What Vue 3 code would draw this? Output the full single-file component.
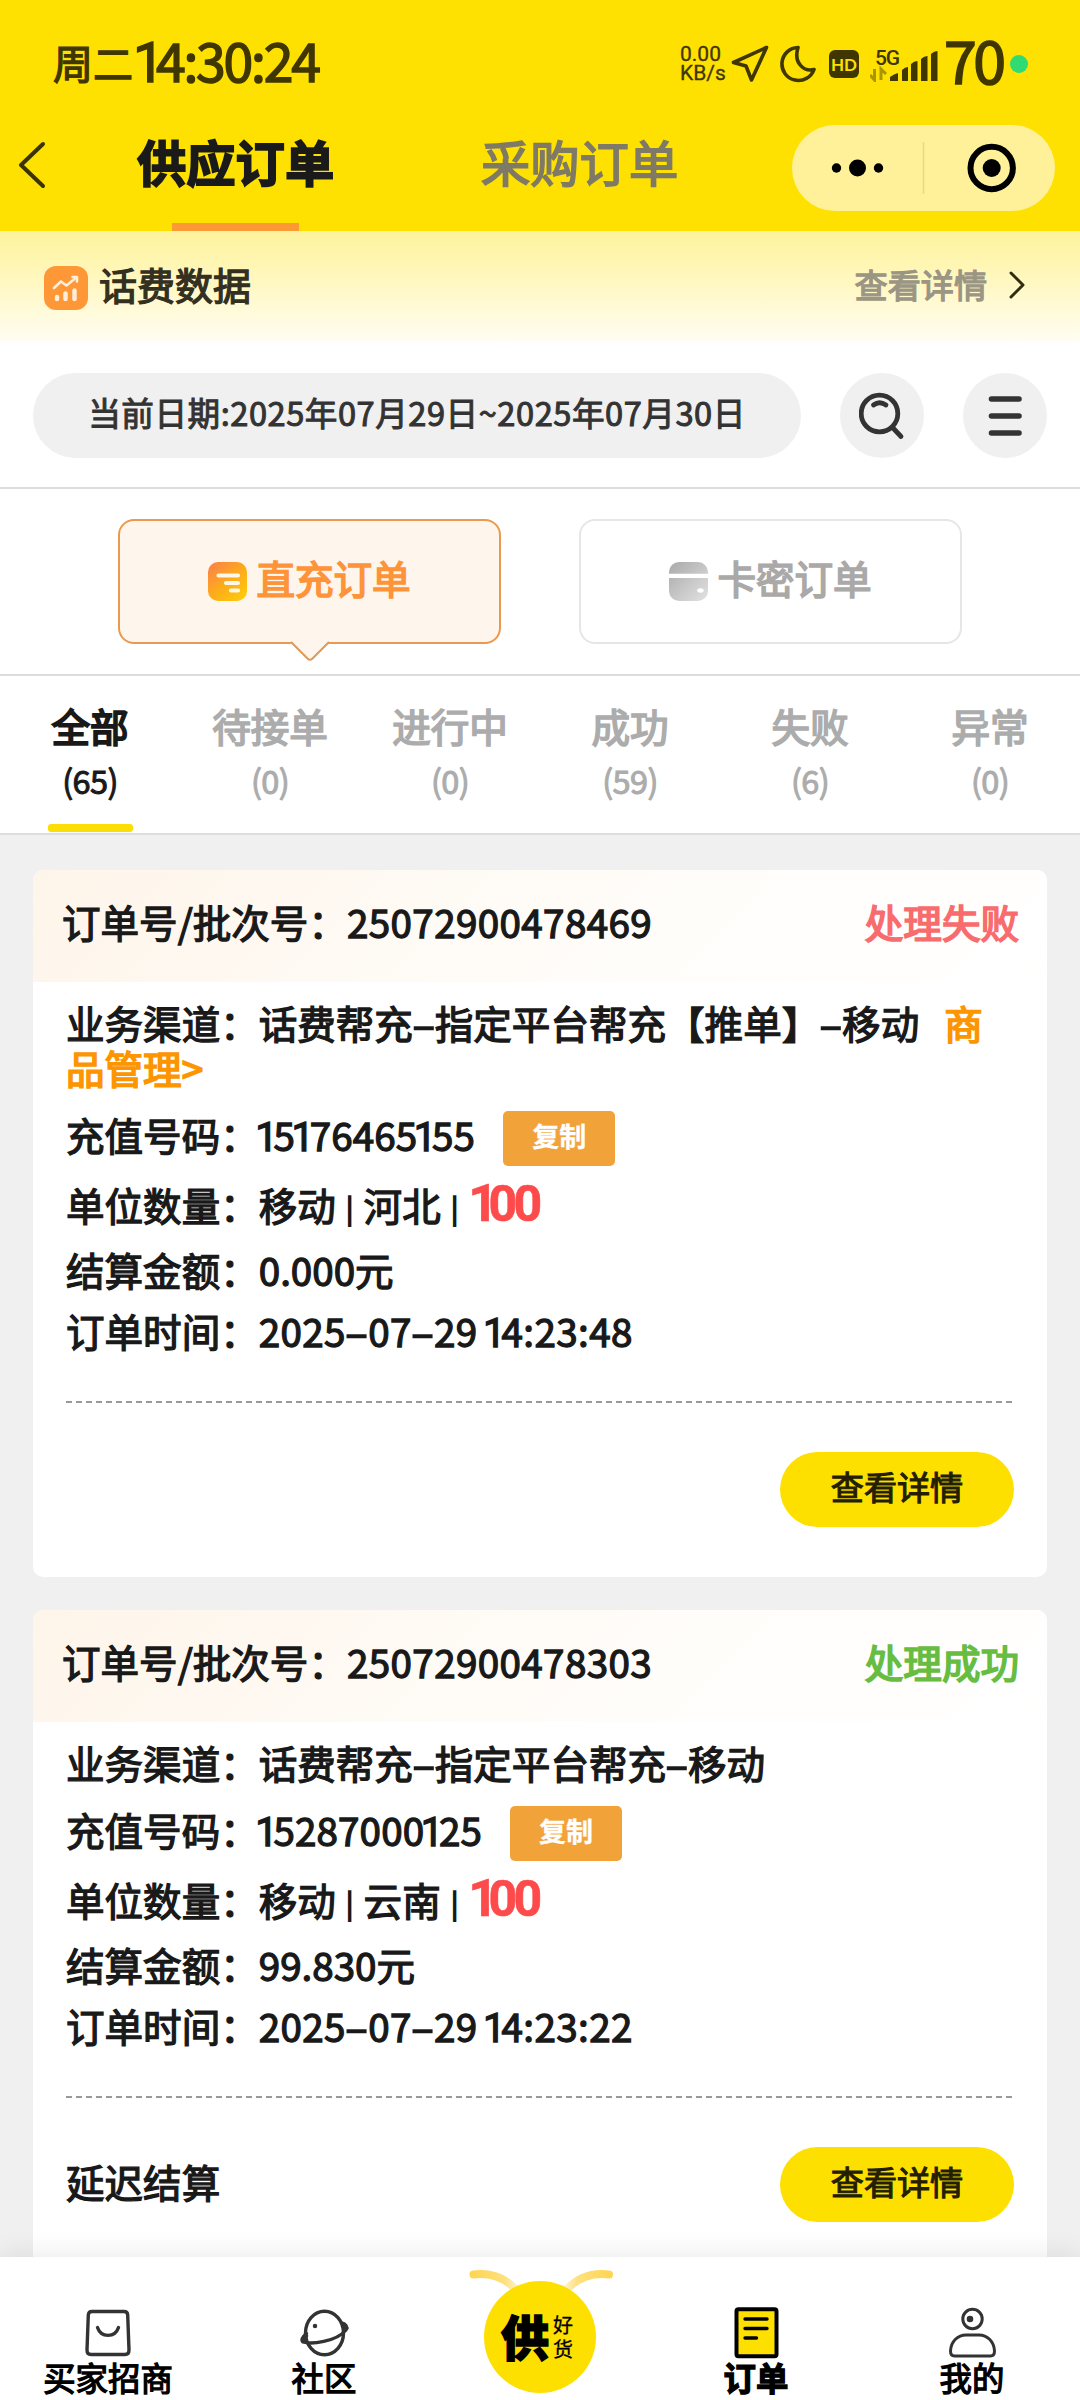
<script setup>
import { h } from 'vue'

// Narrow ones, wide dashes and short bars, as in the rounded interface face.
const marks = { 1: 't-one', '-': 't-dash', '|': 't-bar' }
const T = (props) =>
  h(
    'span',
    { class: 't' },
    props.v.split(/([1|-])/).filter(Boolean).map((p) => (marks[p] ? h('span', { class: marks[p] }, p) : p))
  )
T.props = ['v']

const tabs = [
  { name: '全部', count: 65, active: true },
  { name: '待接单', count: 0 },
  { name: '进行中', count: 0 },
  { name: '成功', count: 59 },
  { name: '失败', count: 6 },
  { name: '异常', count: 0 },
]

const orders = [
  {
    id: '25072900478469', status: '处理失败', kind: 'fail',
    channel: '话费帮充-指定平台帮充【推单】-移动', link: '商品管理>',
    phone: '15176465155', carrier: '移动 | 河北 |', amount: '100',
    settle: '0.000元', time: '2025-07-29 14:23:48', note: '',
  },
  {
    id: '25072900478303', status: '处理成功', kind: 'ok',
    channel: '话费帮充-指定平台帮充-移动', link: '',
    phone: '15287000125', carrier: '移动 | 云南 |', amount: '100',
    settle: '99.830元', time: '2025-07-29 14:23:22', note: '延迟结算',
  },
]
</script>

<template>
  <div class="screen">
    <header class="top">
      <div class="status">
        <div class="clock"><span class="day">周二</span><span class="time"><T v="14:30:24" /></span></div>
        <div class="sys">
          <div class="rate"><span>0.00</span><span>KB/s</span></div>
          <svg class="s-nav" width="38" height="38" viewBox="0 0 38 38"><path d="M35.5 2.500 L2.500 17.500 L15 21 L20.500 35 Z" /></svg>
          <svg class="s-moon" width="36" height="38" viewBox="0 0 36 38"><path d="M18 2.500 A16.500 16.500 0 1 0 34 24.500 C25 27 13 19 18 2.500Z" /></svg>
          <div class="hd">HD</div>
          <svg class="s-sig" width="70" height="36" viewBox="0 0 70 36">
            <text x="5" y="19" textLength="25">5G</text>
            <path class="faint" d="M4.500 23 V34 L0 29 M11 34 V23 L16 28" />
            <path class="bar" d="M20 35v-4q4-3 8-4v8zM32 35V24q3-3 6-3v14zM41 35V18q3-3 6.500-3v20zM51 35V13q3-3 6.500-3v25zM61 35V8q3-3 6.500-3v30z" />
          </svg>
          <div class="batt">70</div>
          <i class="dot"></i>
        </div>
      </div>
      <div class="nav">
        <svg class="back" width="28" height="48" viewBox="0 0 28 48"><path d="M25 3 L3 24 L25 45" /></svg>
        <div class="navtab on">供应订单</div>
        <div class="navtab">采购订单</div>
        <div class="capsule">
          <svg width="263" height="86" viewBox="0 0 263 86">
            <circle cx="44.500" cy="43" r="4.700" /><circle cx="65.500" cy="43" r="8.500" /><circle cx="86.500" cy="43" r="4.700" />
            <path d="M131.500 17v52" stroke="#e4d98c" stroke-width="1.500" />
            <circle cx="199.700" cy="43" r="21.200" fill="none" stroke="#000" stroke-width="6" /><circle cx="199.700" cy="43" r="9" />
          </svg>
        </div>
      </div>
    </header>

    <section class="data">
      <svg width="44" height="44" viewBox="0 0 44 44">
        <rect width="44" height="44" rx="12" fill="#fe9735" />
        <g fill="none" stroke="#ffeeda" stroke-linecap="round" stroke-linejoin="round">
          <path d="M10 22 L17 15.500 L22.500 19.500 L31 12.500" stroke-width="2.600" />
          <path d="M28.500 11 H33 V15.500" stroke-width="2.600" />
          <path d="M13 31v2M21.500 27.500v5.500M30.500 24.500V33" stroke-width="4.500" />
        </g>
      </svg>
      <span class="data-title">话费数据</span>
      <span class="data-more">查看详情</span>
      <svg class="chev" width="18" height="30" viewBox="0 0 18 30"><path d="M3 3 L15 15 L3 27" /></svg>
    </section>

    <section class="filter">
      <div class="pill">当前日期:2025年07月29日~2025年07月30日</div>
      <div class="round">
        <svg width="46" height="48" viewBox="0 0 46 48"><circle cx="20.500" cy="21.500" r="18.300" /><path d="M34 36 L42 44.500M14.500 13 Q20.500 8.500 27 13" /></svg>
      </div>
      <div class="round last">
        <svg width="36" height="42" viewBox="0 0 36 42"><path d="M4.500 4H32M4.500 21H32M4.500 38H32" stroke-width="5.600" /></svg>
      </div>
    </section>

    <section class="types">
      <div class="type sel">
        <svg width="39" height="39" viewBox="0 0 39 39">
          <defs><linearGradient id="gOrange" x1="0" y1="0" x2=".8" y2="1"><stop offset="0" stop-color="#fb7d4d" /><stop offset=".55" stop-color="#fdab1c" /><stop offset="1" stop-color="#fec90a" /></linearGradient></defs>
          <rect width="39" height="39" rx="10" fill="url(#gOrange)" />
          <path d="M10.500 13.500H30M18 21H30M23 28.500H30" stroke="#fff6e8" stroke-width="4.200" stroke-linecap="round" />
        </svg>
        <span>直充订单</span>
        <svg class="tip" width="42" height="22" viewBox="0 0 42 22"><path d="M2 1 L18.500 17.500 Q21 20 23.500 17.500 L40 1" /></svg>
      </div>
      <div class="type">
        <svg width="39" height="39" viewBox="0 0 39 39">
          <defs><linearGradient id="gGrey" x1="0" y1="0" x2="1" y2="1"><stop offset="0" stop-color="#a9a9a9" /><stop offset="1" stop-color="#e2e2e2" /></linearGradient></defs>
          <rect width="39" height="39" rx="10" fill="url(#gGrey)" />
          <path d="M0 13.800H39" stroke="#fff" stroke-width="4.200" />
          <ellipse cx="31.500" cy="28.500" rx="3.200" ry="2.200" fill="#fff" />
        </svg>
        <span>卡密订单</span>
      </div>
    </section>

    <section class="tabs">
      <div v-for="t in tabs" :key="t.name" class="tab" :class="{ active: t.active }">
        <span class="tab-name">{{ t.name }}</span>
        <span class="tab-count">({{ t.count }})</span>
        <i></i>
      </div>
    </section>

    <main class="list">
      <article v-for="o in orders" :key="o.id" class="card">
        <div class="card-head">
          <span>订单号/批次号：<span class="digits">{{ o.id }}</span></span>
          <span class="state" :class="o.kind">{{ o.status }}</span>
        </div>
        <div class="card-body">
          <div class="row channel">业务渠道：<T :v="o.channel" /><span v-if="o.link" class="link">{{ o.link }}</span></div>
          <div class="row phone"><span class="phone-text">充值号码：<span class="number"><T :v="o.phone" /></span></span><span class="copy">复制</span></div>
          <div class="row unit">单位数量：<T :v="o.carrier" /><span class="amount"><T :v="o.amount" /></span></div>
          <div class="row settle">结算金额：<T :v="o.settle" /></div>
          <div class="row when">订单时间：<span class="digits"><T :v="o.time" /></span></div>
          <div class="rule"></div>
          <div class="foot"><span>{{ o.note }}</span><span class="btn">查看详情</span></div>
        </div>
      </article>
    </main>

    <footer class="bottom">
      <div class="item">
        <svg width="60" height="52" viewBox="0 0 60 52"><path d="M14 4.500H46Q49.500 4.500 49.700 8L51 43Q51 47.500 47 47.500H13Q9 47.500 9 43L10.300 8Q10.500 4.500 14 4.500Z" /><path d="M19.500 20.500C23 31 37 31 40.500 20.500" /></svg>
        <span>买家招商</span>
      </div>
      <div class="item">
        <svg width="60" height="52" viewBox="0 0 60 52"><ellipse cx="30.500" cy="26" rx="19" ry="21.700" /><path d="M12.500 26.500Q6 32 9 35C17 37.500 42 35 52 23Q54 17.500 47.500 16" /><path d="M9 33L12 29M52.500 21L50 18" stroke-width="4.500" /><circle cx="21" cy="19" r="1.500" fill="#333" stroke-width="1.500" /></svg>
        <span>社区</span>
      </div>
      <div class="item mid">
        <svg class="horns" width="150" height="34" viewBox="0 0 150 34">
          <defs>
            <linearGradient id="hl" x1="0" x2="1"><stop offset="0" stop-color="#fdd655" /><stop offset=".7" stop-color="#fee07e" /><stop offset="1" stop-color="#fff3cc" /></linearGradient>
            <linearGradient id="hr" x1="1" x2="0"><stop offset="0" stop-color="#fdd655" /><stop offset=".7" stop-color="#fee07e" /><stop offset="1" stop-color="#fff3cc" /></linearGradient>
          </defs>
          <path d="M7.500 10.500Q35 7.500 52 28" stroke="url(#hl)" /><path d="M143 10.500Q115.500 7.500 98.500 28" stroke="url(#hr)" />
        </svg>
        <div class="ball"><b>供</b><span>好<br />货</span></div>
      </div>
      <div class="item cur">
        <svg width="60" height="52" viewBox="0 0 60 52"><rect x="10.500" y="2.300" width="40" height="47" rx="2" fill="#fee000" stroke="#000" stroke-width="4" /><path d="M19 12H41M19 21.500H41M19 31H30.500" stroke="#000" /></svg>
        <span>订单</span>
      </div>
      <div class="item">
        <svg width="60" height="52" viewBox="0 0 60 52"><g stroke-width="3"><circle cx="30.500" cy="12" r="9.700" /><circle cx="28" cy="12" r="1.800" fill="#222" /><path d="M8.500 44C9 34 16 28 24 28H37C45 28 52 34 52.500 44Q52.500 49 48.500 49H12.500Q8.500 49 8.500 44Z" /></g></svg>
        <span>我的</span>
      </div>
    </footer>
  </div>
</template>

<style>
body { background: #f0f0f0; }
.t-one { font-family: Roboto, sans-serif; font-size: 1.04em; line-height: 1; margin: 0 -0.11em 0 -0.09em; }
.t-dash { display: inline-block; line-height: 1; margin: 0 0.11em; transform: scaleX(1.8); }
.t-bar { font-size: 0.7em; line-height: 1; margin: 0 0.06em; vertical-align: 2px; -webkit-text-stroke-width: 1.6px; }
</style>

<style scoped>
.screen {
  width: 1080px; height: 2400px; overflow: hidden; display: flex; flex-direction: column;
  background: #f0f0f0; color: #191919;
  font-family: "Noto Sans CJK SC", "Noto Sans", sans-serif; font-size: 38.550px;
  -webkit-text-stroke: 1.300px currentColor; white-space: nowrap;
}
svg { display: block; flex: none; -webkit-text-stroke: 0; }
.top { height: 231px; background: #fee100; flex: none; }
.status { height: 110px; display: flex; justify-content: space-between; color: #403600; padding: 18px 52px 0 53px; box-sizing: border-box; }
.clock { display: flex; align-items: center; height: 90px; }
.day { font-size: 40px; line-height: 88px; margin-top: -2px; }
.time { font-size: 53.500px; line-height: 82px; margin-top: -8px; letter-spacing: -2.200px; -webkit-text-stroke: 1.500px currentColor; margin-left: 5px; }
.sys { display: flex; align-items: center; height: 92px; }
.rate { font: 21px/19px Roboto, sans-serif; display: flex; flex-direction: column; width: 42px; margin-right: 9px; -webkit-text-stroke: .3px currentColor; }
.s-nav, .s-moon { fill: none; stroke: #403600; stroke-width: 3.6; stroke-linejoin: round; }
.s-moon { margin-left: 11px; }
.hd { width: 30px; height: 28px; border-radius: 6px; margin-left: 13px; background: #403600; color: #fee100; font: bold 17px/29px Lato, sans-serif; text-align: center; -webkit-text-stroke: 0; }
.s-sig { margin-left: 11px; fill: #403600; }
.s-sig text { font: 500 21px Roboto, sans-serif; }
.faint { fill: none; stroke: #a89500; stroke-width: 3; }
.batt { font: 59px/92px "Noto Sans CJK SC", sans-serif; letter-spacing: -3.500px; margin: -10px 0 0 4px; width: 61px; -webkit-text-stroke: 1.600px currentColor; }
.dot { width: 18px; height: 18px; border-radius: 50%; background: #2fdb72; margin-left: 5px; }
.nav { height: 121px; display: flex; align-items: flex-start; }
.back { margin: 31px 0 0 18px; fill: none; stroke: #3b3200; stroke-width: 4; stroke-linecap: round; stroke-linejoin: round; }
.navtab { width: 198px; margin-left: 91px; height: 121px; line-height: 102px; font-size: 49.300px; color: #7f7a66; position: relative; -webkit-text-stroke-width: 1.800px; }
.navtab.on { color: #1a1a1a; font-weight: 700; }
.navtab.on::after { content: ""; position: absolute; left: 35px; bottom: 0; width: 127px; height: 8px; background: #fd9934; }
.navtab + .navtab { margin-left: 146px; }
.capsule { width: 263px; height: 86px; margin: 15px 0 0 113px; border-radius: 43px; background: #fef199; }
.data { height: 113px; flex: none; display: flex; align-items: center; padding: 0 54px 0 44px; box-sizing: border-box; background: linear-gradient(#fdf39c, #fff6b4 30%, #fffdf0 96%, #fff); }
.data-title { font-size: 38px; line-height: 50px; margin: -7px auto 0 11px; color: #33301f; }
.data-more { font-size: 33.120px; line-height: 40px; margin: -8px 21px 0 0; color: #9b9584; }
.chev { margin-top: -5px; fill: none; stroke: #332c10; stroke-width: 3; stroke-linecap: round; stroke-linejoin: round; }
.filter { height: 145px; flex: none; box-sizing: border-box; background: #fff; border-bottom: 2px solid #dcdcdc; padding: 29px 33px 0; display: flex; }
.pill { width: 768px; height: 85px; line-height: 77px; border-radius: 43px; background: #f0f0f0; color: #333; font-size: 32.600px; text-align: center; letter-spacing: .55px; -webkit-text-stroke-width: 1px; }
.round { width: 84px; height: 85px; border-radius: 50%; background: #f0f0f0; margin-left: 39px; display: flex; align-items: center; justify-content: center; }
.round svg { fill: none; stroke: #333; stroke-width: 4.800; stroke-linecap: round; }
.types { height: 187px; flex: none; box-sizing: border-box; background: #fff; border-bottom: 2px solid #dcdcdc; padding: 30px 118px 0; display: flex; justify-content: space-between; }
.type { position: relative; width: 383px; height: 125px; box-sizing: border-box; border: 2px solid #e6e6e6; border-radius: 16px; display: flex; align-items: center; justify-content: center; gap: 9px; color: #aaa9a8; line-height: 60px; -webkit-text-stroke-width: 1.700px; }
.type span { margin-top: -9px; }
.type.sel { background: #fef6ec; border-color: #e99a50; color: #fe943a; }
.tip { position: absolute; left: 169px; top: 120px; fill: #fef6ec; stroke: #dc9a5c; stroke-width: 2; }
.tabs { height: 159px; flex: none; box-sizing: border-box; background: #fff; border-bottom: 2px solid #dedede; display: flex; }
.tab { width: 180px; display: flex; flex-direction: column; align-items: center; color: #acacac; -webkit-text-stroke-width: 1.700px; }
.tab-name { line-height: 60px; margin-top: 19px; }
.tab-count { font-size: 32.500px; line-height: 40px; margin-top: 5px; letter-spacing: -.6px; -webkit-text-stroke-width: 1px; }
.tab i { width: 85px; height: 8px; border-radius: 3px; margin-top: 24px; }
.tab.active { color: #191919; -webkit-text-stroke-width: 2px; }
.tab.active i { background: #fbde08; }
.list { flex: 1 1 0; min-height: 0; overflow: hidden; padding: 35px 33px 0; }
.card { background: #fff; border-radius: 10px; overflow: hidden; margin-bottom: 33px; height: 707px; }
.card-head { height: 112px; box-sizing: border-box; padding: 0 28px 10px 29px; display: flex; align-items: center; justify-content: space-between; background: linear-gradient(135deg, #fef5ea, #fffdfa 60%, #fff); }
.digits { letter-spacing: .4px; }
.number { letter-spacing: .15px; }
.state { -webkit-text-stroke-width: 1.700px; }
.fail { color: #f86c6e; }
.ok { color: #67bd41; }
.card-body { padding: 18px 33px 0; }
.row { line-height: 45px; }
.channel { white-space: normal; }
.link { color: #fc9500; margin-left: 25px; -webkit-text-stroke-width: 1.700px; }
.phone { display: flex; align-items: center; height: 55px; margin-top: 21px; }
.phone-text { margin-top: -6px; }
.copy { width: 112px; height: 55px; line-height: 49px; margin-left: 28px; border-radius: 5px; background: #f1a33a; color: #fff; text-align: center; font-size: 27px; font-weight: 700; -webkit-text-stroke-width: .3px; }
.unit { height: 50px; line-height: 50px; margin-top: 12px; }
.amount { color: #fd4a4b; font-family: Roboto, sans-serif; font-size: 50px; line-height: 1; font-weight: 700; letter-spacing: -3.800px; margin-left: 13px; -webkit-text-stroke-width: .6px; }
.settle { margin-top: 19px; }
.when { margin-top: 16px; }
.rule { height: 2px; margin-top: 47px; background: repeating-linear-gradient(90deg, #999 0 6px, transparent 6px 10px); }
.foot { display: flex; justify-content: space-between; margin-top: 49px; line-height: 69px; }
.btn { width: 234px; height: 75px; line-height: 69px; border-radius: 38px; background: #fee000; color: #241e00; text-align: center; font-size: 33.120px; -webkit-text-stroke-width: 1.100px; }
.bottom { position: relative; height: 143px; flex: none; background: #fff; display: flex; box-shadow: 0 -6px 24px rgba(0, 0, 0, .07); }
.item { width: 216px; display: flex; flex-direction: column; align-items: center; padding-top: 50px; box-sizing: border-box; color: #000; font-size: 32.400px; line-height: 36px; }
.item > svg { fill: none; stroke: #333; stroke-width: 3.400; stroke-linecap: round; stroke-linejoin: round; }
.item > span { height: 36px; line-height: 35px; }
.cur { font-weight: 700; }
.mid { position: relative; padding-top: 24px; }
.horns { position: absolute; top: 7px; left: 34px; }
.item > .horns { stroke-width: 8; }
.ball { position: relative; width: 112px; height: 112px; border-radius: 50%; background: #fee000; display: flex; align-items: center; box-sizing: border-box; padding-left: 17px; }
.ball b { font-size: 48px; line-height: 60px; font-weight: 900; -webkit-text-stroke-width: 1.500px; margin-top: -5px; }
.ball span { font-size: 20px; line-height: 24px; margin-left: 4px; -webkit-text-stroke-width: .3px; }
</style>
